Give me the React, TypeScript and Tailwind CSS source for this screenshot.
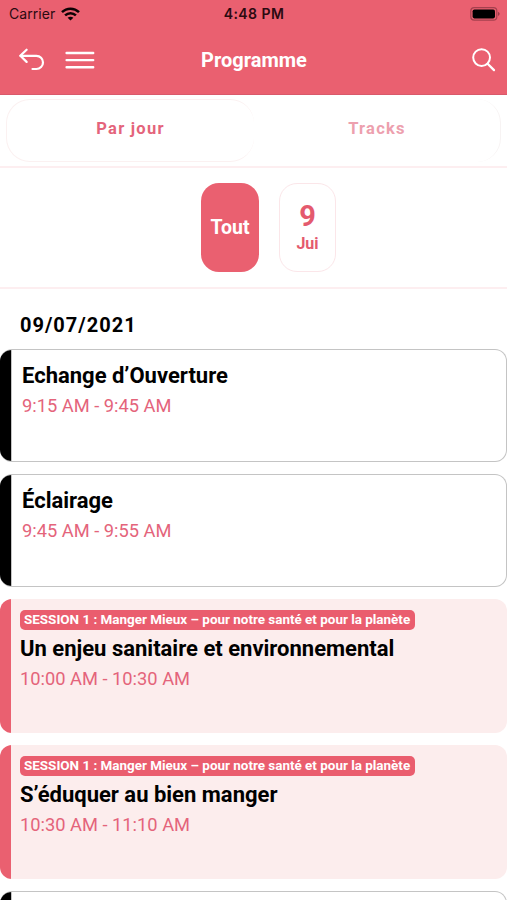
import React from "react";

type Session = { title: string; time: string; tag?: string };

const sessions: Session[] = [
  { title: "Echange d’Ouverture", time: "9:15 AM - 9:45 AM" },
  { title: "Éclairage", time: "9:45 AM - 9:55 AM" },
  {
    title: "Un enjeu sanitaire et environnemental",
    time: "10:00 AM - 10:30 AM",
    tag: "SESSION 1 : Manger Mieux – pour notre santé et pour la planète",
  },
  {
    title: "S’éduquer au bien manger",
    time: "10:30 AM - 11:10 AM",
    tag: "SESSION 1 : Manger Mieux – pour notre santé et pour la planète",
  },
  { title: "", time: "" },
];

function StatusBar() {
  return (
    <div className="flex h-[27px] items-center justify-between pr-[7px] pl-[9px] font-['Inter','Liberation_Sans',sans-serif] text-[14px] text-[#2b0a10]">
      <div className="flex w-[119px] items-center gap-[6px]">
        <span className="tracking-[0.05px]">Carrier</span>
        <svg width="19" height="14" viewBox="0 0 19 14" fill="none" stroke="#0d0204" strokeWidth="2.5">
          <path d="M1 5.2C5.8.5 13.2.5 18 5.2" />
          <path d="M4.1 8.4c3.1-3 7.7-3 10.8 0" />
          <path d="M9.5 13.6 6.6 10.8c1.7-1.5 4.1-1.5 5.8 0Z" fill="#0d0204" stroke="none" />
        </svg>
      </div>
      <span className="text-[14px] font-semibold tracking-[0.45px]">4:48 PM</span>
      <div className="flex w-[120px] justify-end">
        <svg width="30" height="14" viewBox="0 0 30 14" fill="none">
          <rect x="0.8" y="0.7" width="26" height="12.4" rx="3.4" stroke="#a5404e" strokeWidth="1.2" />
          <rect x="2.6" y="2.4" width="22.4" height="9" rx="1.8" fill="#000" />
          <path d="M28.2 4.8c1.8.8 1.8 3.4 0 4.2Z" fill="#8a3340" />
        </svg>
      </div>
    </div>
  );
}

function Header() {
  return (
    <header className="h-[95px] shrink-0 border-b border-[#d9596b] bg-[#ea6070]">
      <StatusBar />
      <div className="flex h-[66px] items-center justify-between pr-[11px] pl-[19px]">
        <div className="flex w-[90px] items-center gap-[20px]">
          <svg width="26" height="24" viewBox="0 0 26 24" fill="none" stroke="#fff" strokeWidth="2.2" strokeLinecap="round" strokeLinejoin="round">
            <path d="M7.6 1.7 1.3 7.8l6.3 6.1" />
            <path d="M1.6 7.8h15.8a6.6 6.6 0 0 1 0 13.2h-3.9" />
          </svg>
          <svg width="30" height="20" viewBox="0 0 30 20" stroke="#fff" strokeWidth="2.4" strokeLinecap="round">
            <path d="M1.6 3h26.6M1.6 10.1h26.6M1.6 17.2h26.6" />
          </svg>
        </div>
        <h1 className="text-[20px] font-bold text-white">Programme</h1>
        <div className="flex w-[97px] justify-end">
          <svg width="24" height="24" viewBox="0 0 24 24" fill="none" stroke="#fff" strokeWidth="2" strokeLinecap="round">
            <circle cx="9.6" cy="9.6" r="8.4" />
            <path d="m15.6 15.8 6.4 6.3" strokeWidth="2.3" />
          </svg>
        </div>
      </div>
    </header>
  );
}

function Card({ title, time, tag }: Session) {
  return (
    <article
      className={
        tag
          ? "flex h-[134px] shrink-0 overflow-hidden rounded-[12px] bg-[#fceded]"
          : "flex h-[113px] shrink-0 overflow-hidden rounded-[12px] border border-l-0 border-[#c4c4c4] bg-white"
      }
    >
      <div className={tag ? "w-[11px] bg-[#ea6070]" : "-my-px w-[11px] bg-black"} />
      <div className={tag ? "pt-[11px] pl-[9px]" : "border-l border-[#c4c4c4] pt-[11px] pl-[10px]"}>
        {tag && (
          <div className="mb-[4px] flex h-[20px] w-[395px] items-center rounded-[5px] bg-[#ea5d6e] pl-[4px] text-[13.45px] font-bold whitespace-nowrap text-white">
            {tag}
          </div>
        )}
        <h2 className="text-[22px] leading-[30px] font-bold whitespace-nowrap text-black">{title}</h2>
        <p className="pt-[3px] text-[18.3px] leading-[24px] text-[#e4647b]">{time}</p>
      </div>
    </article>
  );
}

export default function App() {
  return (
    <div className="flex h-[900px] w-[507px] flex-col overflow-hidden bg-white font-['Roboto',sans-serif]">
      <Header />
      <nav className="h-[73px] shrink-0 border-b-2 border-[#fdeef0] px-[6px] pt-[4px]">
        <div className="flex h-[63px] rounded-[24px] border-r border-[#f7f3f3]">
          <button className="w-[248px] rounded-[24px] border border-r-0 border-[#fbf1f1] pb-[2px] text-[16.5px] font-bold tracking-[1.25px] text-[#e4647b]">
            Par jour
          </button>
          <button className="w-[246px] pb-[2px] text-[16.5px] font-bold tracking-[1.25px] text-[#eda0ae]">Tracks</button>
        </div>
      </nav>
      <div className="flex h-[121px] shrink-0 gap-[20px] border-b-2 border-[#fdeef0] pt-[15px] pl-[201px]">
        <button className="h-[89px] w-[58px] rounded-[18px] bg-[#ea6070] text-[19.5px] font-bold text-white">Tout</button>
        <button className="flex h-[89px] w-[57px] flex-col items-center rounded-[18px] border border-[#fbe6e9] pt-[16px] font-bold text-[#e45a6e]">
          <span className="text-[29px] leading-[32px]">9</span>
          <span className="pt-[2px] text-[16px] leading-[20px]">Jui</span>
        </button>
      </div>
      <h3 className="h-[60px] shrink-0 pt-[21px] pl-[20px] text-[20px] leading-[30px] font-bold tracking-[1px] text-black">
        09/07/2021
      </h3>
      <main className="flex flex-col gap-[12px]">
        {sessions.map((s, i) => (
          <Card key={i} {...s} />
        ))}
      </main>
    </div>
  );
}
